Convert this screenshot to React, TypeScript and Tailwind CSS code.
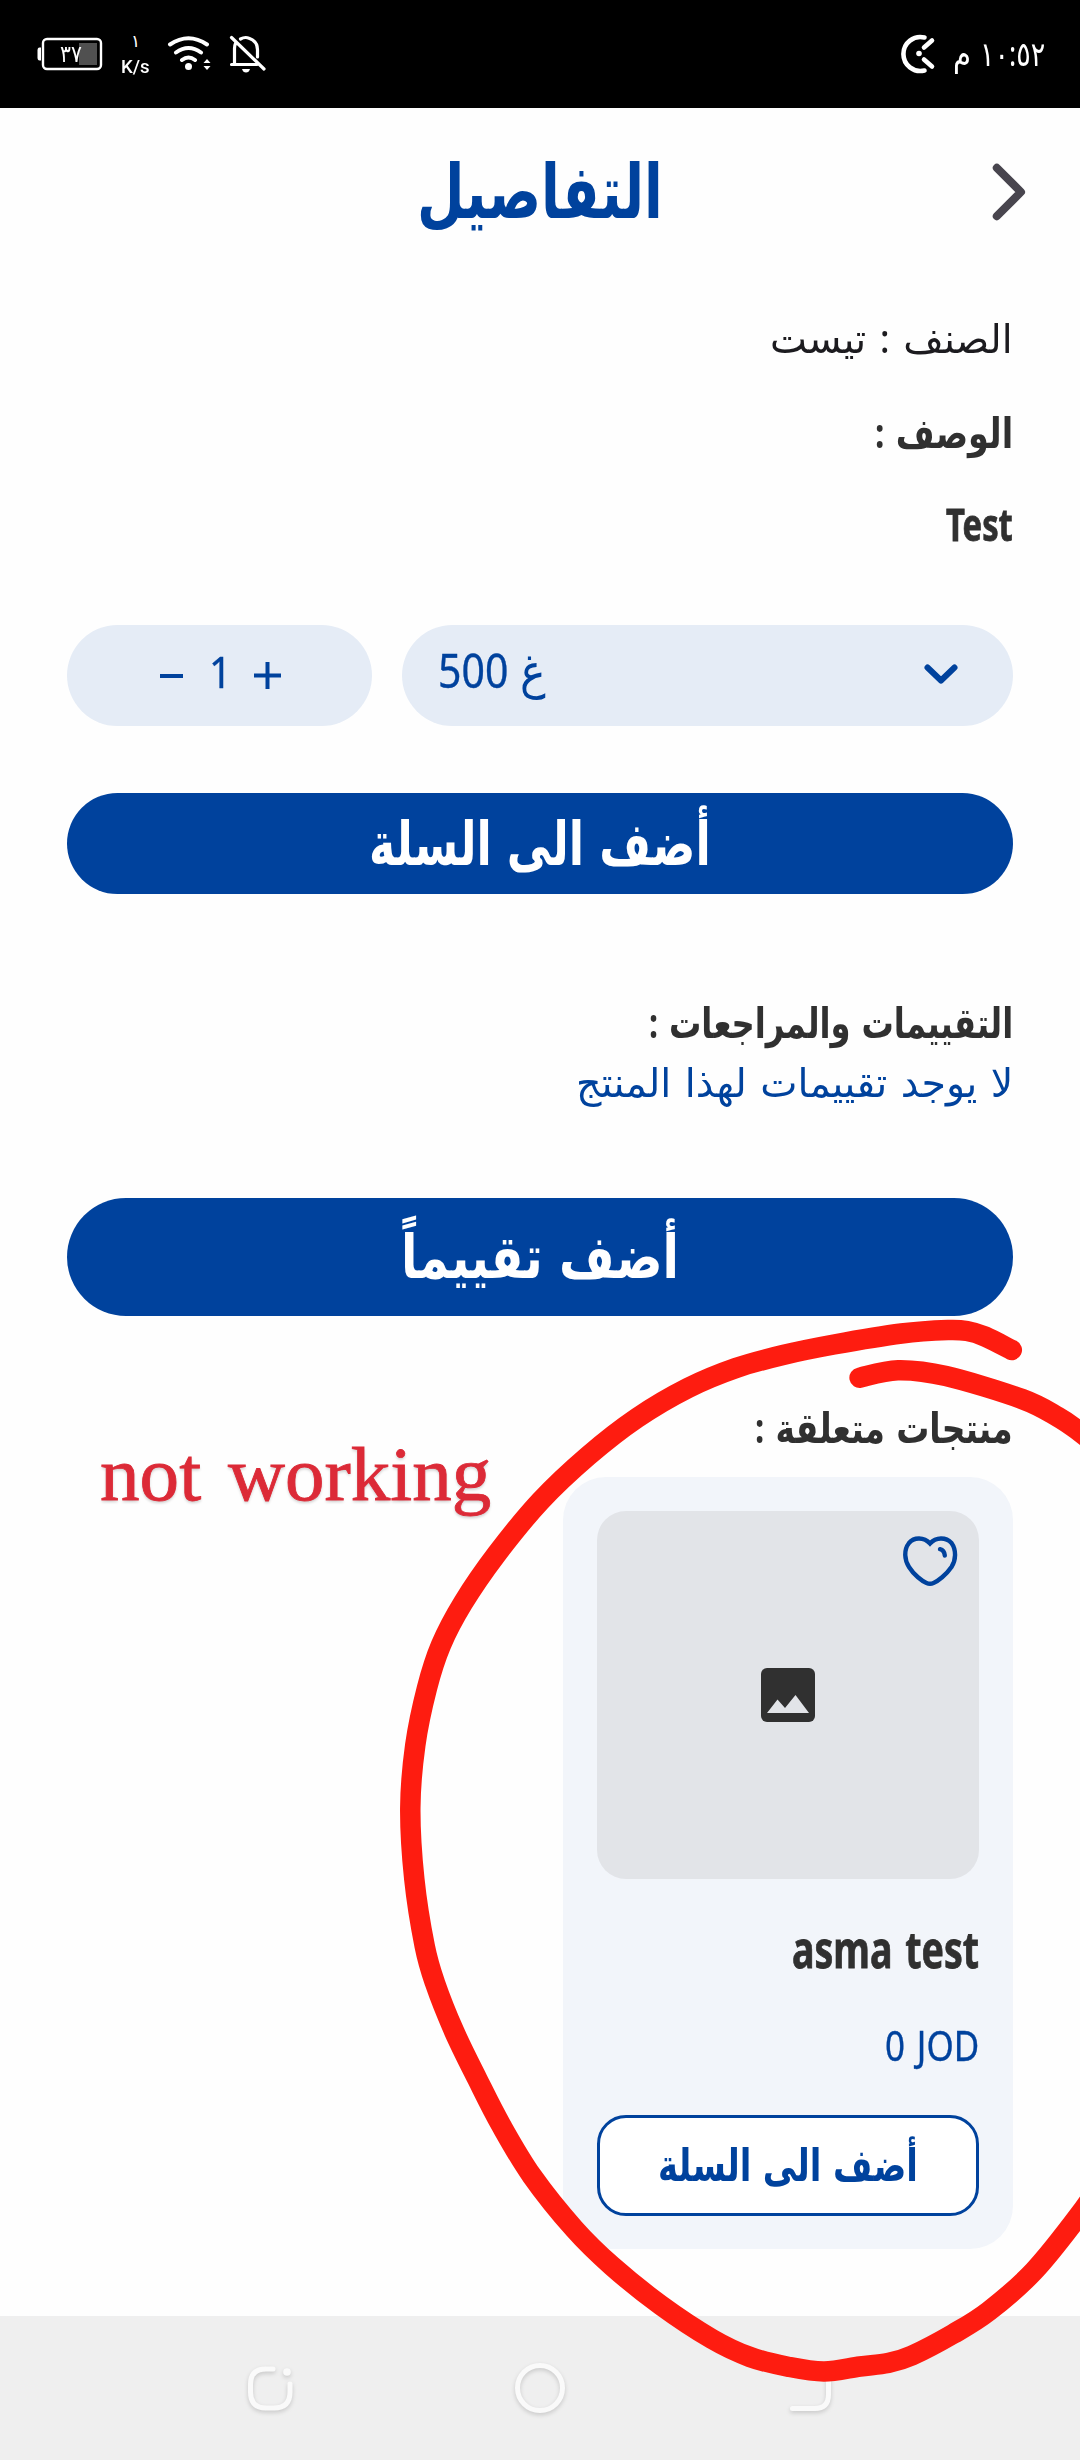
import { useLayoutEffect, useRef, useState } from "react";

/* Text squeezed horizontally so that it fills exactly `width` pixels. */
function Fit({ text, width, className = "", dir = "rtl" }: { text: string; width: number; className?: string; dir?: "rtl" | "ltr" }) {
  const ref = useRef<HTMLSpanElement>(null);
  const [scale, setScale] = useState(1);
  useLayoutEffect(() => {
    if (ref.current) setScale(width / ref.current.offsetWidth);
  }, [text, width]);
  return (
    <div dir="ltr" className="shrink-0" style={{ width }}>
      <span ref={ref} dir={dir} className={"block w-max origin-left whitespace-nowrap [word-spacing:0.08em] " + className} style={{ transform: `scaleX(${scale})` }}>
        {text}
      </span>
    </div>
  );
}

/* Smooth SVG path through a list of points (Catmull-Rom). */
function smooth(p: number[][]) {
  let d = `M${p[0][0]} ${p[0][1]}`;
  for (let i = 0; i < p.length - 1; i++) {
    const a = p[i - 1] ?? p[i];
    const b = p[i];
    const c = p[i + 1];
    const e = p[i + 2] ?? c;
    d += `C${b[0] + (c[0] - a[0]) / 6} ${b[1] + (c[1] - a[1]) / 6} ${c[0] - (e[0] - b[0]) / 6} ${c[1] - (e[1] - b[1]) / 6} ${c[0]} ${c[1]}`;
  }
  return d;
}

const loop = [
  [1011.8, 1350], [985, 1336.5], [967, 1331], [948, 1330], [901.5, 1333.5], [834, 1344.5], [783, 1355], [736, 1368], [688, 1388],
  [637, 1418], [588, 1456], [540.5, 1501], [496.7, 1554], [463, 1603], [441, 1645], [427, 1688], [415.3, 1745], [410.3, 1808],
  [414.3, 1879], [424.7, 1946], [435, 1983], [454, 2031], [477.3, 2079], [501, 2125], [532, 2176], [574.4, 2229],
  [612, 2266], [660.5, 2305], [712, 2339], [750, 2357], [788, 2366.700], [824, 2371.500], [860, 2366.500],
  [888, 2363], [912, 2355.500], [953, 2334], [989, 2311], [1034, 2271], [1080, 2214], [1110, 2170],
];
const tail = [[859.6, 1377.7], [898, 1370.2], [946, 1376], [1022, 1399], [1058, 1417], [1080, 1432], [1110, 1456]];

function StatusBar() {
  return (
    <header className="flex h-[108px] items-start bg-black text-white">
      <svg className="ml-[36px] mt-[34px] h-[40px] w-[68px]" viewBox="36 34 68 40">
        <rect x="43" y="39" width="58" height="30" rx="4" fill="none" stroke="#fff" strokeWidth="2.4" />
        <path d="M41 47.5h-1.500q-2 0-2 3v7q0 3 2 3h1.500z" fill="#fff" />
        <rect x="79" y="43" width="18" height="22" fill="#505050" />
      </svg>
      <div className="relative -ml-[44px] mt-[39px] w-[22px] text-[24px] leading-[28px]">
        <Fit text="٣٧" width={22} />
      </div>
      <div className="ml-[39px] mt-[30px] flex w-[29px] flex-col items-center">
        <span className="text-[17px] leading-[22px]">١</span>
        <div className="mt-[5px] font-['Roboto'] text-[18px] font-medium leading-[20px]">
          <Fit text="K/s" width={29} dir="ltr" />
        </div>
      </div>
      <svg className="ml-[17px] mt-[32px] h-[42px] w-[46px]" viewBox="168 32 46 42" fill="none" stroke="#fff" strokeWidth="4" strokeLinecap="round">
        <path d="M171 44.500q18.500-12.500 37 0M177 52.500q12.500-9 25 0M183 60q6.500-5 13 0" />
        <circle cx="189.500" cy="66.500" r="3.500" fill="#fff" stroke="none" />
        <path d="M204.500 63l3.500-4 3.500 4zM204.500 66l3.500 4 3.500-4z" fill="#fff" stroke="none" />
      </svg>
      <svg className="ml-[16px] mt-[32px] h-[42px] w-[38px]" viewBox="230 32 38 42" fill="none" stroke="#fff" strokeWidth="3.200" strokeLinecap="round" strokeLinejoin="round">
        <path d="M232.500 37.500L265 69M232.500 64.500H258M235.500 64V48.500q0-3 1-5M241.500 39Q246 36.500 250 38.200q8.500 3 8.500 11.500V57" />
        <path d="M243 69h8q-1 3.500-4 3.500t-4-3.500z" fill="#fff" stroke="none" />
      </svg>
      <svg className="ml-auto mr-[2px] mt-[32px] h-[44px] w-[38px]" viewBox="894 32 38 44" fill="none" stroke="#fff" strokeWidth="4.600" strokeLinecap="round">
        <path d="M920.500 37.500A17 17 0 1 0 920.500 70.500M920 47.500l8-7M920 59.500l8 7" />
        <circle cx="915" cy="53.500" r="2.800" fill="#fff" stroke="none" />
      </svg>
      <div className="ml-[15px] mr-[35px] mt-[31px] flex gap-[9px] text-[34px] leading-[44px]">
        <Fit text="م" width={18} />
        <Fit text="١٠:٥٢" width={65} />
      </div>
    </header>
  );
}

function ProductCard() {
  return (
    <article className="mr-[67px] h-[772px] w-[450px] self-end rounded-[43px] bg-[#f2f5fa] px-[34px] pt-[34px]">
      <div className="relative flex h-[368px] items-center justify-center rounded-[29px] bg-[#e2e4e8]">
        <svg className="h-[54px] w-[54px]" viewBox="0 0 54 54">
          <rect width="54" height="54" rx="6" fill="#303030" />
          <path d="M6 45L16.500 31.500 24 40 34.500 27 48 45z" fill="#e2e4e8" />
        </svg>
        <svg className="absolute right-[20px] top-[23px] h-[54px] w-[58px]" viewBox="901 1534 58 54" fill="none" stroke="#00429d" strokeWidth="4.400" strokeLinecap="round">
          <path d="M930 1543.500C924 1537 914 1537 909 1543C903.500 1550 904.500 1560 909 1567C914 1575 922 1581 926.500 1583Q930 1584.500 933.500 1583C938 1581 946 1575 951.500 1567C956 1560 956.500 1550 951.500 1543C946 1537 936 1537 930 1543.500zM940 1549.200q4.300 1 4.800 6.300" />
        </svg>
      </div>
      <div className="flex flex-col items-end">
        <div className="mt-[40px] text-[50px] font-bold leading-[60px] text-[#303030]">
          <Fit text="asma test" width={187} dir="ltr" className="[-webkit-text-stroke:0.8px]" />
        </div>
        <div className="mt-[38px] text-[42px] leading-[56px] text-[#00429d]">
          <Fit text="0 JOD" width={94} dir="ltr" className="[-webkit-text-stroke:0.4px]" />
        </div>
      </div>
      <button className="mt-[42px] flex h-[101px] w-full items-center justify-center rounded-[29px] border-[3px] border-[#00429d] bg-white pb-[4px] text-[45px] font-bold text-[#00429d]">
        <Fit text="أضف الى السلة" width={260} />
      </button>
    </article>
  );
}

export default function App() {
  return (
    <div className="relative flex h-[2460px] w-[1080px] flex-col overflow-hidden bg-[#fefefe] font-['Noto_Sans','DejaVu_Sans',sans-serif]">
      <StatusBar />
      <div className="flex h-[168px] items-center">
        <div className="ml-[417px] pb-[6px] text-[75px] font-bold leading-[100px] text-[#00429d]">
          <Fit text="التفاصيل" width={246} />
        </div>
        <svg className="ml-auto mr-[52px] h-[64px] w-[38px]" viewBox="990 160 38 64" fill="none" stroke="#48454e" strokeWidth="8" strokeLinecap="round" strokeLinejoin="round">
          <path d="M996.800 167.800L1021 192 996.800 216.200" />
        </svg>
      </div>

      <section className="flex flex-col items-end pr-[67px]">
        <div className="mt-[32px] text-[40px] leading-[60px] text-[#1c1b1f]">
          <Fit text="الصنف : تيست" width={243} />
        </div>
        <div className="mt-[34px] text-[42px] font-bold leading-[60px] text-[#303030]">
          <Fit text="الوصف :" width={138} />
        </div>
        <div className="mt-[32px] text-[44px] font-bold leading-[60px] text-[#303030]">
          <Fit text="Test" width={67} dir="ltr" className="[-webkit-text-stroke:0.8px]" />
        </div>
      </section>

      <section className="mx-[67px] mt-[71px] flex h-[101px] shrink-0 gap-[30px] text-[#00429d]">
        <div className="flex w-[305px] items-center rounded-full bg-[#e5ecf6]">
          <span className="ml-[93px] h-[4px] w-[23px] bg-[#00429d]" />
          <div className="ml-[26px] pb-[7px] text-[43px] leading-[60px]">
            <Fit text="1" width={23} dir="ltr" className="[-webkit-text-stroke:0.4px]" />
          </div>
          <svg className="ml-[22px] h-[27px] w-[27px]" viewBox="0 0 27 27" fill="#00429d">
            <path d="M11.500 0h4v11.500H27v4H15.500V27h-4V15.500H0v-4h11.500z" />
          </svg>
        </div>
        <div className="flex grow items-center rounded-full bg-[#e5ecf6] pl-[36px] pr-[54px]">
          <div className="flex gap-[12px] pb-[11px] text-[48px] leading-[80px]">
            <Fit text="500" width={70} dir="ltr" className="[-webkit-text-stroke:0.4px]" />
            <Fit text="غ" width={26} />
          </div>
          <svg className="mb-[3px] ml-auto h-[24px] w-[36px]" viewBox="0 0 36 24" fill="none" stroke="#00429d" strokeWidth="6" strokeLinecap="round" strokeLinejoin="round">
            <path d="M4.500 5.500L18 18.500 31.500 5.500" />
          </svg>
        </div>
      </section>

      <button className="mx-[67px] mt-[67px] flex h-[101px] shrink-0 items-center justify-center rounded-full bg-[#00429d] pb-[4px] text-[60px] font-bold leading-[90px] text-white">
        <Fit text="أضف الى السلة" width={342} />
      </button>

      <section className="mt-[98px] flex flex-col items-end pr-[67px]">
        <div className="text-[42px] font-bold leading-[60px] text-[#303030]">
          <Fit text="التقييمات والمراجعات :" width={364} />
        </div>
        <div className="text-[40px] leading-[60px] text-[#00429d]">
          <Fit text="لا يوجد تقييمات لهذا المنتج" width={437} />
        </div>
      </section>

      <button className="mx-[67px] mt-[86px] flex h-[118px] shrink-0 items-center justify-center rounded-full bg-[#00429d] pb-[4px] text-[60px] font-bold leading-[90px] text-white">
        <Fit text="أضف تقييماً" width={278} />
      </button>

      <div className="mb-[20px] mt-[81px] flex justify-end pr-[67px] text-[42px] font-bold leading-[60px] text-[#303030]">
        <Fit text="منتجات متعلقة :" width={258} />
      </div>
      <ProductCard />

      <nav className="mt-auto h-[144px] bg-[#efefef]">
        <svg className="h-[144px] w-[1080px] drop-shadow-[0_2px_2px_rgba(0,0,0,0.16)]" viewBox="0 2316 1080 144" fill="none" stroke="#fafafa" strokeWidth="5" strokeLinecap="round">
          <path d="M273 2369h-7q-15.500 0-15.500 15v8q0 16 15.500 16h8q16 0 16-16v-8" />
          <circle cx="287" cy="2372" r="3.800" fill="#fafafa" stroke="none" />
          <circle cx="540" cy="2388" r="22.500" />
          <path d="M792.500 2408.500h22q14 0 14-14V2380" />
        </svg>
      </nav>

      <div className="absolute left-[100px] top-[1424px] flex gap-[27px] font-['Liberation_Serif',serif] text-[76px] leading-[100px] text-[#dc2a37] [text-shadow:0_2px_3px_rgba(0,0,0,0.2)]">
        <Fit text="not" width={101} dir="ltr" className="[-webkit-text-stroke:0.8px]" />
        <Fit text="working" width={263} dir="ltr" className="[-webkit-text-stroke:0.8px]" />
      </div>
      <svg className="pointer-events-none absolute inset-0 h-[2460px] w-[1080px]" viewBox="0 0 1080 2460" fill="none" stroke="#fe1c10" strokeWidth="20.500" strokeLinecap="round" strokeLinejoin="round">
        <path d={smooth(loop)} />
        <path d={smooth(tail)} />
      </svg>
    </div>
  );
}
